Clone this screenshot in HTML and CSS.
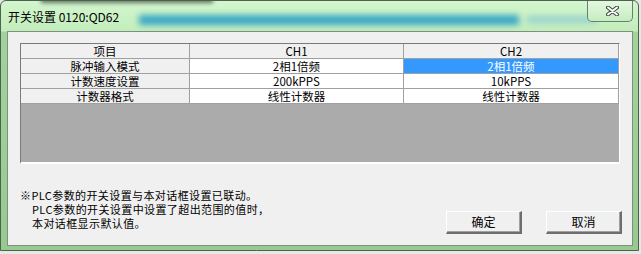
FILE: index.html
```html
<!DOCTYPE html>
<html lang="zh-CN">
<head>
<meta charset="UTF-8">
<title>开关设置</title>
<link rel="stylesheet" href="styles.css">
</head>
<body>

    <div class="window">
        <div class="titlebar">
            <span class="behind"></span>
            <span class="title">开关设置 0120:QD62</span>
            <button class="close">
                <svg width="13" height="10" viewBox="0 0 13 10">
                    <path d="M2 1.5 L11 8.5 M11 1.5 L2 8.5" stroke="#3c4a3c" stroke-width="4" stroke-linecap="round"/>
                    <path d="M2 1.5 L11 8.5 M11 1.5 L2 8.5" stroke="#ffffff" stroke-width="2" stroke-linecap="round"/>
                </svg>
            </button>
        </div>

        <div class="client">
            <div class="grid">
                <div class="cell head">项目</div>
                <div class="cell head">CH1</div>
                <div class="cell head">CH2</div>

                <div class="cell label">脉冲输入模式</div>
                <div class="cell">2相1倍频</div>
                <div class="cell selected">2相1倍频</div>

                <div class="cell label">计数速度设置</div>
                <div class="cell">200kPPS</div>
                <div class="cell">10kPPS</div>

                <div class="cell label">计数器格式</div>
                <div class="cell">线性计数器</div>
                <div class="cell">线性计数器</div>

                <div class="empty"></div>
            </div>

            <div class="footer">
                <div class="notes">
                    <p>※PLC参数的开关设置与本对话框设置已联动。</p>
                    <p class="indent">PLC参数的开关设置中设置了超出范围的值时，</p>
                    <p class="indent">本对话框显示默认值。</p>
                </div>
                <div class="buttons">
                    <button class="btn">确定</button>
                    <button class="btn">取消</button>
                </div>
            </div>
        </div>
    </div>

</body>
</html>
```

FILE: styles.css
```css
body {
    margin: 0;
    width: 641px;
    height: 254px;
    background: #e6e8e6;
    font-family: "Noto Sans CJK SC", "Noto Sans", sans-serif;
    font-size: 12px;
    color: #000;
    overflow: hidden;
}
.window {
    box-sizing: border-box;
    width: 639px;
    height: 251px;
    border: 1px solid #4e634e;
    border-radius: 6px 6px 0 0;
    padding: 0 5px 4px 6px;
    display: flex;
    flex-direction: column;
    background: linear-gradient(to bottom, #d2f6cd 0, #c3edbd 30px, #a3d39c 31px, #98c990 100%);
}
.titlebar {
    position: relative;
    height: 30px;
    display: flex;
    justify-content: space-between;
    align-items: flex-start;
    overflow: hidden;
}
/* blurred window behind the glass */
.titlebar::before {
    content: "";
    position: absolute;
    left: 132px;
    top: 14px;
    width: 380px;
    height: 10px;
    background: #2a9fc6;
    filter: blur(3px);
    opacity: 0.9;
}
.titlebar::after {
    content: "";
    position: absolute;
    left: 520px;
    top: 15px;
    width: 70px;
    height: 7px;
    background: #6fb8d8;
    filter: blur(3px);
    opacity: 0.55;
}
.behind {
    position: absolute;
    left: 34px;
    top: -4px;
    width: 172px;
    height: 6px;
    background: #2e3a30;
    filter: blur(2px);
    opacity: 0.7;
}
.title {
    position: relative;
    z-index: 1;
    padding-left: 1px;
    margin-top: 7px;
    font-size: 12px;
    line-height: 18px;
    color: #000;
}
.close {
    position: relative;
    z-index: 1;
    box-sizing: border-box;
    width: 46px;
    height: 21px;
    margin: 0;
    padding: 0;
    border: 1px solid #6b806b;
    border-top: none;
    border-radius: 0 0 5px 5px;
    background: linear-gradient(to bottom, #e4f8e1, #c6ecc1);
    display: flex;
    align-items: center;
    justify-content: center;
}
.close svg {
    display: block;
    margin-left: 4px;
}
.client {
    box-sizing: border-box;
    flex: 1;
    border: 1px solid #7f8f7f;
    background: #f0f0f0;
    padding: 11px 10px 11px 12px;
    display: flex;
    flex-direction: column;
}
.grid {
    display: grid;
    grid-template-columns: 169px 214px 215px;
    grid-template-rows: 15px 15px 15px 15px 58px;
    width: 598px;
    border-top: 1px solid #7a7a7a;
    border-left: 1px solid #7a7a7a;
    border-right: 1px solid #ffffff;
    border-bottom: 2px solid #ffffff;
}
.cell {
    box-sizing: border-box;
    border-right: 1px solid #a0a0a0;
    border-bottom: 1px solid #a0a0a0;
    background: #ffffff;
    text-align: center;
    line-height: 14px;
    font-size: 11.5px;
    white-space: nowrap;
}
.cell.head,
.cell.label {
    background: #f0f0f0;
}
.cell.selected {
    background: #3399ff;
    color: #ffffff;
}
.empty {
    grid-column: 1 / 4;
    background: #ababab;
}
.footer {
    flex: 1;
    display: flex;
    justify-content: space-between;
}
.notes {
    padding-top: 24px;
    align-self: flex-start;
}
.notes p {
    margin: 0;
    line-height: 14px;
    font-size: 11px;
    letter-spacing: 0.4px;
    white-space: nowrap;
}
.notes .indent {
    padding-left: 12px;
}
.buttons {
    align-self: flex-end;
    display: flex;
    gap: 24px;
}
.btn {
    box-sizing: border-box;
    width: 76px;
    height: 23px;
    margin: 0;
    padding: 0;
    font-family: "Noto Sans CJK SC", sans-serif;
    font-size: 12px;
    line-height: 16px;
    color: #000;
    background: #f0f0f0;
    border-top: 1px solid #ffffff;
    border-left: 1px solid #ffffff;
    border-right: 2px solid #6e6e6e;
    border-bottom: 2px solid #6e6e6e;
    box-shadow: inset -1px -1px 0 #a0a0a0;
}
```
